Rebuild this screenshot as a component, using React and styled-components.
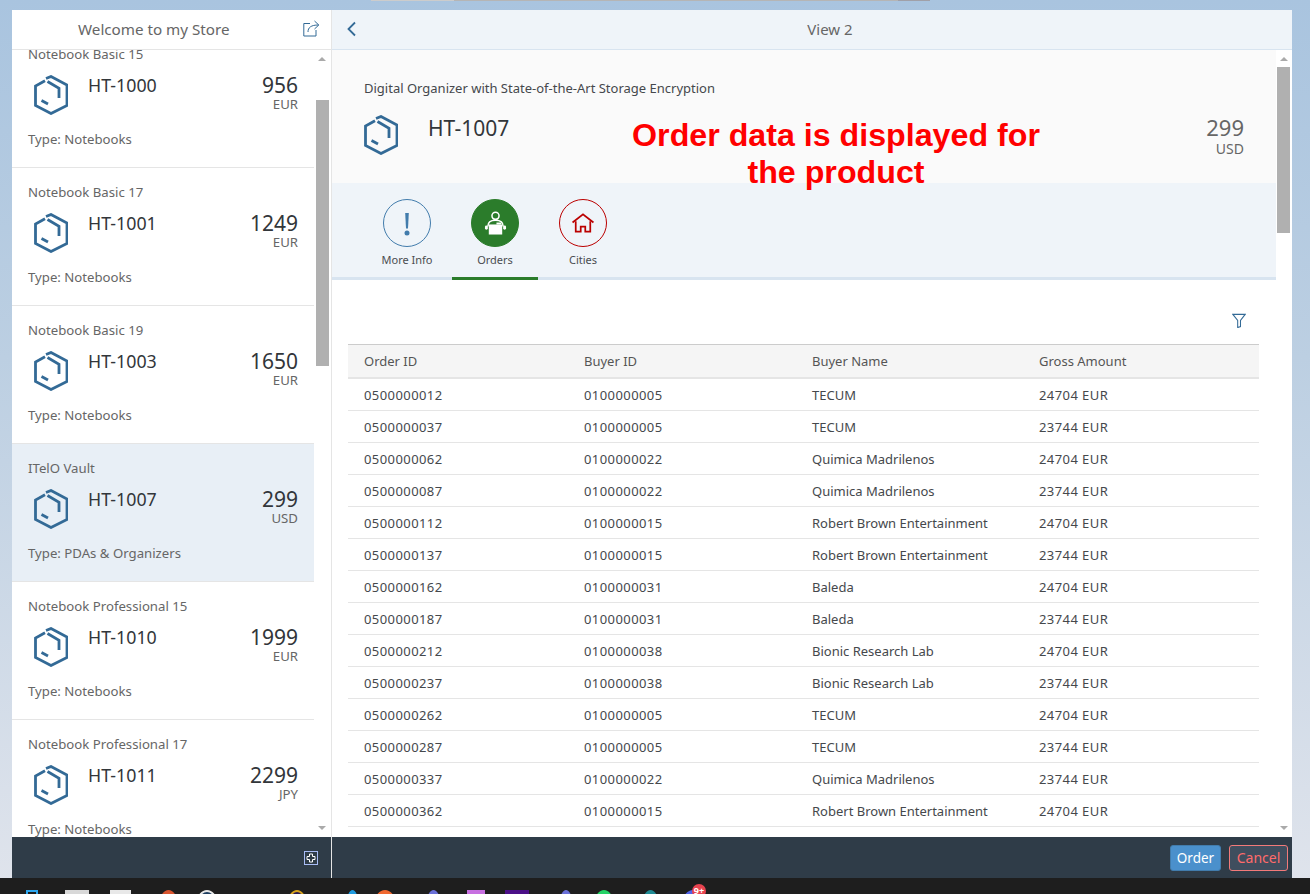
import React from "react";
import styled, { createGlobalStyle } from "styled-components";

const GlobalStyle = createGlobalStyle`
  html, body {
    margin: 0;
    height: 100%;
    overflow: hidden;
  }
  body {
    font-family: "Noto Sans", "Open Sans", sans-serif;
    color: #32363a;
  }
`;

const products = [
  { title: "Notebook Basic 15", id: "HT-1000", price: "956", cur: "EUR", type: "Notebooks" },
  { title: "Notebook Basic 17", id: "HT-1001", price: "1249", cur: "EUR", type: "Notebooks" },
  { title: "Notebook Basic 19", id: "HT-1003", price: "1650", cur: "EUR", type: "Notebooks" },
  { title: "ITelO Vault", id: "HT-1007", price: "299", cur: "USD", type: "PDAs & Organizers", selected: true },
  { title: "Notebook Professional 15", id: "HT-1010", price: "1999", cur: "EUR", type: "Notebooks" },
  { title: "Notebook Professional 17", id: "HT-1011", price: "2299", cur: "JPY", type: "Notebooks" },
];

const orders = [
  ["0500000012", "0100000005", "TECUM", "24704 EUR"],
  ["0500000037", "0100000005", "TECUM", "23744 EUR"],
  ["0500000062", "0100000022", "Quimica Madrilenos", "24704 EUR"],
  ["0500000087", "0100000022", "Quimica Madrilenos", "23744 EUR"],
  ["0500000112", "0100000015", "Robert Brown Entertainment", "24704 EUR"],
  ["0500000137", "0100000015", "Robert Brown Entertainment", "23744 EUR"],
  ["0500000162", "0100000031", "Baleda", "24704 EUR"],
  ["0500000187", "0100000031", "Baleda", "23744 EUR"],
  ["0500000212", "0100000038", "Bionic Research Lab", "24704 EUR"],
  ["0500000237", "0100000038", "Bionic Research Lab", "23744 EUR"],
  ["0500000262", "0100000005", "TECUM", "24704 EUR"],
  ["0500000287", "0100000005", "TECUM", "23744 EUR"],
  ["0500000337", "0100000022", "Quimica Madrilenos", "23744 EUR"],
  ["0500000362", "0100000015", "Robert Brown Entertainment", "24704 EUR"],
];

const taskIcons = [
  { w: 12, gap: 26, c: "transparent", b: "#2ea7ef" },
  { w: 24, gap: 27, c: "#d8d8d8" },
  { w: 21, gap: 21, c: "#e8e8e8" },
  { w: 17, gap: 29, c: "#d8552f", round: true },
  { w: 20, gap: 20, c: "#1d3d5f", b: "#e8e8e8", round: true },
  { w: 18, gap: 71, c: "#2a1a52", b: "#d6a21e", round: true },
  { w: 11, gap: 41, c: "#1f9be0", round: true },
  { w: 20, gap: 17, c: "#f0682f", round: true },
  { w: 13, gap: 32, c: "#6a70d8", round: true },
  { w: 18, gap: 27, c: "#c76fe0" },
  { w: 24, gap: 20, c: "#4b0f87" },
  { w: 12, gap: 31, c: "#6a70d8", round: true },
  { w: 18, gap: 23, c: "#25d366", round: true },
  { w: 15, gap: 30, c: "#1f8a94", round: true },
  { w: 20, gap: 25, c: "#4f62e8", round: true, badge: "9+" },
];

const ProductIcon = () => (
  <svg width="34" height="40" viewBox="0 0 34 40" fill="none" stroke="#336a96" strokeWidth="2.8">
    <path d="M12 3.500 17 1.500 33 10V30.500L17 38.500 1.500 30.500V11L11 5.800" />
    <path d="M13.500 6.500 25 13.200V23" />
    <path d="M7.500 25.500 14 29" />
  </svg>
);

const App = () => (
  <Page>
    <GlobalStyle />
    <TopEdge>
      <EdgePiece $w={83} $c="#cccccc" />
      <EdgePiece $w={444} $c="#b5b5b5" />
      <EdgePiece $w={32} $c="#a0a0a8" />
    </TopEdge>
    <Shell>
      <Master>
        <MasterHeader>
          <MasterTitle>Welcome to my Store</MasterTitle>
          <svg width="17" height="17" viewBox="0 0 17 17" fill="none" stroke="#336a96" strokeWidth="1">
            <path d="M7 3.500H.8V16H13V10" />
            <path d="M5 12C5 7.500 8 5 15.500 5" />
            <path d="M11.500 1 15.800 5 11.500 9" />
          </svg>
        </MasterHeader>
        <MasterBody>
          <ListViewport>
            {products.map((p) => (
              <ListItem key={p.id} $selected={p.selected}>
                <ItemTitle>{p.title}</ItemTitle>
                <ItemMain>
                  <ItemIcon>
                    <ProductIcon />
                  </ItemIcon>
                  <ItemId>{p.id}</ItemId>
                  <ItemPrice>
                    <strong>{p.price}</strong>
                    <span>{p.cur}</span>
                  </ItemPrice>
                </ItemMain>
                <ItemType>Type: {p.type}</ItemType>
              </ListItem>
            ))}
          </ListViewport>
          <Scrollbar $top={34} $thumb={266} />
        </MasterBody>
        <Footer $end>
          <svg width="14" height="14" viewBox="0 0 14 14" fill="none">
            <rect x=".5" y=".5" width="13" height="13" stroke="#a9bdf5" />
            <path d="M5.500 3h3v2.500H11v3H8.500V11h-3V8.500H3v-3h2.500z" stroke="#fff" />
          </svg>
        </Footer>
      </Master>

      <Detail>
        <DetailHeader>
          <svg width="12" height="16" viewBox="0 0 12 16" fill="none" stroke="#336a96" strokeWidth="1.800">
            <path d="M9 1.500 2.500 8 9 14.500" />
          </svg>
          <DetailTitle>View 2</DetailTitle>
        </DetailHeader>
        <DetailBody>
          <DetailContent>
            <ObjectHeader>
              <ObjectTitle>Digital Organizer with State-of-the-Art Storage Encryption</ObjectTitle>
              <ObjectMain>
                <ObjectIcon>
                  <ProductIcon />
                </ObjectIcon>
                <ObjectId>HT-1007</ObjectId>
                <ObjectPrice>
                  <strong>299</strong>
                  <span>USD</span>
                </ObjectPrice>
              </ObjectMain>
              <Callout>
                Order data is displayed for
                <br />
                the product
              </Callout>
            </ObjectHeader>

            <TabBar>
              <Tab>
                <TabCircle $border="#427cac">
                  <svg width="10" height="27" viewBox="0 0 10 27" fill="#427cac">
                    <path d="M3.200 3h3.600l-.8 15.500H4z" />
                    <circle cx="5" cy="23" r="2.500" />
                  </svg>
                </TabCircle>
                <TabLabel>More Info</TabLabel>
              </Tab>
              <Tab $active>
                <TabCircle $border="#2b7c2b" $fill="#2b7c2b">
                  <svg width="23" height="25" viewBox="0 0 24 26" fill="none" stroke="#fff" strokeWidth="1.600">
                    <circle cx="12" cy="5" r="3.700" />
                    <path d="M4 16c0-4 3-6.500 8-6.500s8 2.500 8 6.500" />
                    <rect x="1" y="15" width="3" height="4.500" rx="1.500" fill="#fff" stroke="none" />
                    <rect x="20" y="15" width="3" height="4.500" rx="1.500" fill="#fff" stroke="none" />
                    <rect x="5" y="14" width="14" height="10.500" fill="#fff" stroke="none" />
                    <path d="M13 12h5v2h-5z" fill="#fff" stroke="none" />
                  </svg>
                </TabCircle>
                <TabLabel>Orders</TabLabel>
              </Tab>
              <Tab>
                <TabCircle $border="#bb0000">
                  <svg width="24" height="20" viewBox="0 0 26 22" fill="none" stroke="#bb0000" strokeWidth="1.900">
                    <path d="M1.500 10.500 13 1.500l11.500 9" />
                    <path d="M5 9v11.500h5.500V15h5v5.500H21V9" />
                  </svg>
                </TabCircle>
                <TabLabel>Cities</TabLabel>
              </Tab>
            </TabBar>

            <TableSection>
              <TableTools>
                <svg width="14" height="15" viewBox="0 0 16 16" preserveAspectRatio="none" fill="none" stroke="#336a96" strokeWidth="1.200">
                  <path d="M1 1.500H15L9.700 8V14.500L6.500 15.500V8z" />
                </svg>
              </TableTools>
              <TableHead>
                <HeadCell>Order ID</HeadCell>
                <HeadCell>Buyer ID</HeadCell>
                <HeadCell>Buyer Name</HeadCell>
                <HeadCell>Gross Amount</HeadCell>
              </TableHead>
              {orders.map((row) => (
                <TableRow key={row[0]}>
                  {row.map((cell, i) => (
                    <Cell key={i} $num={i !== 2}>
                      {cell}
                    </Cell>
                  ))}
                </TableRow>
              ))}
            </TableSection>
          </DetailContent>
          <Scrollbar $top={1} $thumb={166} $narrow />
        </DetailBody>
        <Footer>
          <OrderButton>Order</OrderButton>
          <CancelButton>Cancel</CancelButton>
        </Footer>
      </Detail>
    </Shell>

    <Taskbar>
      {taskIcons.map((t, i) => (
        <TaskIcon key={i} $w={t.w} $gap={t.gap} $c={t.c} $b={t.b} $round={t.round}>
          {t.badge && <Badge>{t.badge}</Badge>}
        </TaskIcon>
      ))}
    </Taskbar>
  </Page>
);

const Scrollbar = ({ $top, $thumb, $narrow }) => (
  <ScrollTrack $narrow={$narrow}>
    <ArrowUp />
    <Thumb $top={$top} $h={$thumb} $narrow={$narrow} />
    <ArrowDown />
  </ScrollTrack>
);

const Page = styled.div`
  width: 1310px;
  height: 894px;
  display: flex;
  flex-direction: column;
  overflow: hidden;
  background: linear-gradient(180deg, #a9c4df 0%, #bccfe2 40%, #e0e4ec 100%);
`;

const TopEdge = styled.div`
  height: 1px;
  flex: none;
  padding-left: 371px;
  display: flex;
`;

const EdgePiece = styled.div`
  width: ${(p) => p.$w}px;
  background: ${(p) => p.$c};
`;

const Shell = styled.div`
  flex: none;
  height: 868px;
  margin: 9px 18px 0 12px;
  display: flex;
  background: #fff;
`;

const Master = styled.div`
  width: 320px;
  box-sizing: border-box;
  flex: none;
  display: flex;
  flex-direction: column;
  border-right: 1px solid #e5e5e5;
`;

const MasterHeader = styled.div`
  height: 40px;
  flex: none;
  box-sizing: border-box;
  border-bottom: 1px solid #e5e5e5;
  padding: 0 11px 2px 66px;
  display: flex;
  align-items: center;
  justify-content: space-between;
`;

const MasterTitle = styled.div`
  font-size: 15.2px;
  color: #666;
`;

const MasterBody = styled.div`
  flex: 1;
  min-height: 0;
  display: flex;
  overflow: hidden;
`;

const ListViewport = styled.div`
  flex: 1;
  min-width: 0;
  overflow: hidden;
  margin-top: -20px;
`;

const ListItem = styled.div`
  height: 138px;
  box-sizing: border-box;
  padding: 15px 16px 0;
  border-bottom: 1px solid #e5e5e5;
  background: ${(p) => (p.$selected ? "#e8eff6" : "#fff")};
`;

const ItemTitle = styled.div`
  font-size: 13.2px;
  line-height: 18px;
  color: #666;
`;

const ItemMain = styled.div`
  display: flex;
  align-items: flex-start;
  margin-top: 10px;
  padding-left: 6px;
  height: 48px;
`;

const ItemIcon = styled.div`
  margin-top: 2px;
  line-height: 0;
`;

const ItemId = styled.div`
  font-size: 17.8px;
  line-height: 24px;
  margin-left: 20px;
  flex: 1;
  color: #32363a;
`;

const ItemPrice = styled.div`
  display: flex;
  flex-direction: column;
  align-items: flex-end;

  strong {
    font-size: 21px;
    font-weight: 400;
    line-height: 24px;
  }

  span {
    font-size: 13.2px;
    line-height: 15px;
    color: #666;
  }
`;

const ItemType = styled.div`
  font-size: 13.2px;
  line-height: 18px;
  color: #666;
  margin-top: 9px;
`;

const ScrollTrack = styled.div`
  width: ${(p) => (p.$narrow ? 16 : 17)}px;
  flex: none;
  position: relative;
  background: #fff;
`;

const ArrowUp = styled.div`
  position: absolute;
  top: 7px;
  left: 4px;
  border: 4px solid transparent;
  border-top: 0;
  border-bottom: 4px solid #aaa;
`;

const ArrowDown = styled.div`
  position: absolute;
  bottom: 7px;
  left: 4px;
  border: 4px solid transparent;
  border-bottom: 0;
  border-top: 4px solid #aaa;
`;

const Thumb = styled.div`
  position: absolute;
  left: ${(p) => (p.$narrow ? 1 : 2)}px;
  right: 2px;
  top: ${(p) => p.$top + 16}px;
  height: ${(p) => p.$h}px;
  background: #b0b0b0;
`;

const Footer = styled.div`
  height: 41px;
  flex: none;
  background: #2f3c48;
  display: flex;
  align-items: center;
  justify-content: flex-end;
  gap: 8px;
  padding-right: ${(p) => (p.$end ? 13 : 4)}px;
`;

const Detail = styled.div`
  flex: 1;
  min-width: 0;
  display: flex;
  flex-direction: column;
`;

const DetailHeader = styled.div`
  height: 40px;
  flex: none;
  box-sizing: border-box;
  background: #eff4f9;
  border-bottom: 1px solid #d8e4f0;
  display: flex;
  align-items: center;
  padding: 0 0 2px 14px;
`;

const DetailTitle = styled.div`
  flex: 1;
  text-align: center;
  font-size: 15px;
  color: #666;
  padding-left: 10px;
`;

const DetailBody = styled.div`
  flex: 1;
  min-height: 0;
  display: flex;
  overflow: hidden;
`;

const DetailContent = styled.div`
  flex: 1;
  min-width: 0;
`;

const ObjectHeader = styled.div`
  position: relative;
  height: 133px;
  box-sizing: border-box;
  background: #fafafa;
  padding: 29px 32px 0;
`;

const ObjectTitle = styled.div`
  font-size: 13px;
  line-height: 18px;
  color: #45484c;
`;

const ObjectMain = styled.div`
  display: flex;
  align-items: flex-start;
  margin-top: 18px;
`;

const ObjectIcon = styled.div`
  line-height: 0;
`;

const ObjectId = styled.div`
  font-size: 21px;
  line-height: 26px;
  margin-left: 30px;
  flex: 1;
  color: #32363a;
`;

const ObjectPrice = styled(ItemPrice)`
  margin-top: -2px;

  strong {
    font-size: 22px;
    line-height: 28px;
    color: #666;
  }

  span {
    font-size: 14px;
    line-height: 15px;
  }
`;

const Callout = styled.div`
  position: absolute;
  left: 284px;
  width: 440px;
  top: 67px;
  text-align: center;
  font-family: "Liberation Sans", Arial, sans-serif;
  font-weight: 700;
  font-size: 32.2px;
  line-height: 37px;
  color: #ff0000;
`;

const TabBar = styled.div`
  height: 97px;
  box-sizing: border-box;
  background: #eff4f9;
  border-bottom: 3px solid #d8e4f0;
  padding: 16px 0 0 32px;
  display: flex;
  gap: 2px;
`;

const Tab = styled.div`
  width: 86px;
  height: 81px;
  box-sizing: border-box;
  display: flex;
  flex-direction: column;
  align-items: center;
  border-bottom: 3px solid ${(p) => (p.$active ? "#2b7c2b" : "transparent")};
`;

const TabCircle = styled.div`
  width: 48px;
  height: 48px;
  box-sizing: border-box;
  border-radius: 50%;
  border: 1px solid ${(p) => p.$border};
  background: ${(p) => p.$fill || "transparent"};
  display: flex;
  align-items: center;
  justify-content: center;
`;

const TabLabel = styled.div`
  font-size: 11px;
  line-height: 16px;
  margin-top: 5px;
  color: #4a4d50;
`;

const TableSection = styled.div`
  padding: 0 17px 0 16px;
`;

const TableTools = styled.div`
  height: 64px;
  box-sizing: border-box;
  padding: 33px 13px 0 0;
  display: flex;
  justify-content: flex-end;
`;

const columns = "220px 228px 227px 1fr";

const TableHead = styled.div`
  display: grid;
  grid-template-columns: ${columns};
  height: 35px;
  box-sizing: border-box;
  align-items: center;
  background: #f5f5f5;
  border-top: 1px solid #ccc;
  border-bottom: 2px solid #e5e5e5;
`;

const HeadCell = styled.div`
  padding-left: 16px;
  font-size: 13px;
  color: #555;
`;

const TableRow = styled.div`
  display: grid;
  grid-template-columns: ${columns};
  height: 32px;
  box-sizing: border-box;
  align-items: center;
  border-bottom: 1px solid #e5e5e5;
`;

const Cell = styled.div`
  padding-left: 16px;
  font-size: 13px;
  letter-spacing: ${(p) => (p.$num ? "0.42px" : "0")};
  color: #45484c;
`;

const OrderButton = styled.button`
  width: 51px;
  height: 26px;
  padding: 0;
  border: 1px solid #427cac;
  border-radius: 3px;
  background: #4a90cc;
  color: #fff;
  font: inherit;
  font-size: 13.5px;
`;

const CancelButton = styled(OrderButton)`
  width: 59px;
  font-size: 14px;
  border-color: #f27a7a;
  background: #3f4e5e;
  color: #ff6b6b;
`;

const Taskbar = styled.div`
  flex: 1;
  background: #1e1e1e;
  display: flex;
  align-items: flex-start;
  padding-top: 12px;
  overflow: hidden;
`;

const TaskIcon = styled.div`
  position: relative;
  flex: none;
  width: ${(p) => p.$w}px;
  height: 24px;
  margin-left: ${(p) => p.$gap}px;
  box-sizing: border-box;
  background: ${(p) => p.$c};
  border: ${(p) => (p.$b ? `2px solid ${p.$b}` : "none")};
  border-radius: ${(p) => (p.$round ? "50%" : "0")};
`;

const Badge = styled.span`
  position: absolute;
  top: -6px;
  right: -3px;
  width: 14px;
  height: 14px;
  border-radius: 50%;
  background: #e8434f;
  color: #fff;
  font-size: 9px;
  line-height: 14px;
  font-weight: 700;
  text-align: center;
`;

export default App;
